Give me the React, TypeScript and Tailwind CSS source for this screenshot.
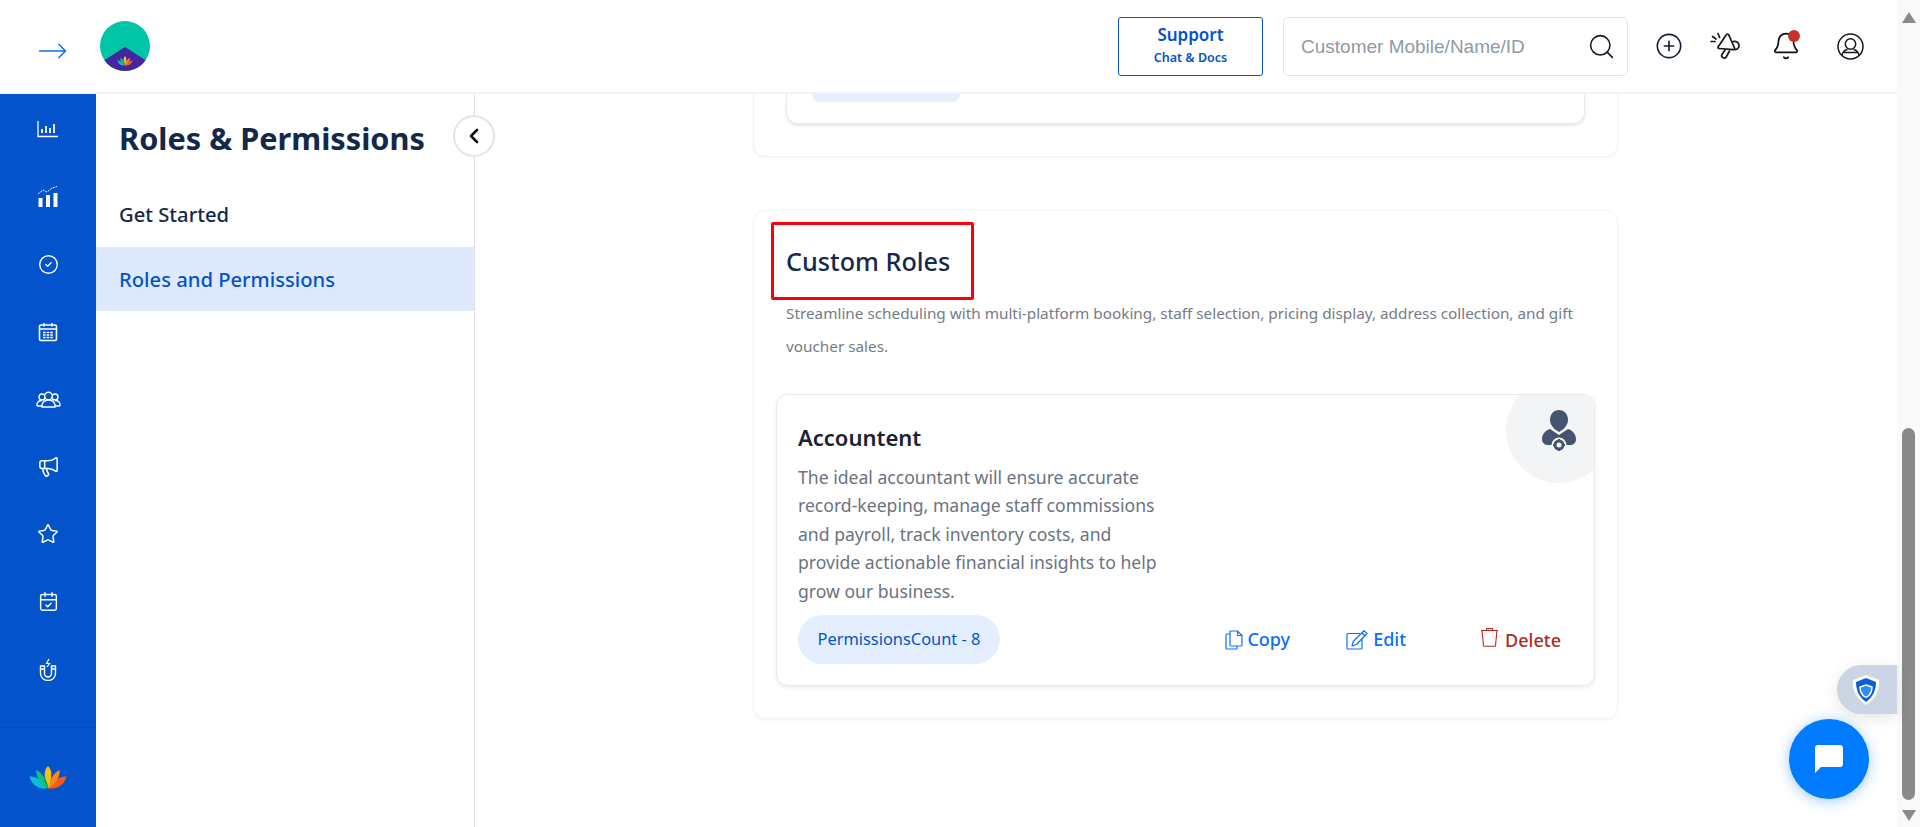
import { ChevronLeft, Star, CalendarCheck, CircleCheck, Search, CirclePlus, Bell, Megaphone } from 'lucide-react';

const FONT = "font-['Noto_Sans',sans-serif]";

function BarsIcon() {
  return (
    <svg width="22" height="18" viewBox="0 0 22 18" fill="none" stroke="white" strokeWidth="1.3">
      <path d="M1 1v15.5h20" />
      <path d="M5 13V9M9 13V6M13 13V8M17 13V4" strokeWidth="1.8" />
    </svg>
  );
}

function GrowthIcon() {
  return (
    <svg width="22" height="22" viewBox="0 0 22 22" fill="white">
      <rect x="1.5" y="12" width="4" height="9" />
      <rect x="9" y="9" width="4" height="12" />
      <rect x="16.5" y="7" width="4" height="14" />
      <path d="M1 8l5-4 4 2 5-4 5-1.5" fill="none" stroke="white" strokeWidth="1" strokeDasharray="2 1" />
    </svg>
  );
}

function CalendarGridIcon() {
  return (
    <svg width="20" height="20" viewBox="0 0 20 20" fill="none" stroke="white" strokeWidth="1.6">
      <rect x="1.5" y="3" width="17" height="15.5" rx="1.5" />
      <path d="M1.5 7h17M6 1v3.5M14 1v3.5" />
      <path d="M5 10.5h10M5 13h10M5 15.5h10" strokeWidth="1.6" strokeDasharray="2.6 1" />
    </svg>
  );
}

function GroupIcon() {
  return (
    <svg width="25" height="17" viewBox="0 0 25 17" fill="none" stroke="white" strokeWidth="1.4">
      <circle cx="6" cy="6" r="3" />
      <circle cx="19" cy="6" r="3" />
      <path d="M1 15c-.5-4 2-5.5 5-5.5M24 15c.5-4-2-5.5-5-5.5M1 15h5M19 15h5" />
      <circle cx="12.5" cy="5" r="3.8" fill="#0353cc" />
      <path d="M6 16c-.5-4.5 2.5-7 6.5-7s7 2.5 6.5 7z" fill="#0353cc" />
    </svg>
  );
}

function MagnetIcon() {
  return (
    <svg width="18" height="23" viewBox="0 0 18 23" fill="none" stroke="white" strokeWidth="1.4">
      <path d="M1.5 8v7.5a7.5 7 0 0 0 15 0V8h-4v7.5a3.5 3.5 0 0 1-7 0V8z" />
      <path d="M1.5 11h4M12.5 11h4" />
      <path d="M10 1L7.5 5.5h3L8 9" strokeWidth="1.2" />
    </svg>
  );
}

function Lotus({ size = 38 }: { size?: number }) {
  return (
    <svg width={size} height={size * 0.62} viewBox="0 0 38 24">
      <path d="M0 11c5-1 12 2 18 12-8 1-15-3-18-12z" fill="#0bbcd6" />
      <path d="M7 4c5 2 10 8 12 19-7-4-12-11-12-19z" fill="#0cc47a" />
      <path d="M38 11c-5-1-12 2-19 12 9 1 16-3 19-12z" fill="#f7590f" />
      <path d="M31 4c-5 2-10 8-12 19 7-4 12-11 12-19z" fill="#f98a1a" />
      <path d="M19 0c-4 4-5 10 0 23 5-13 4-19 0-23z" fill="#fbbf14" />
      <path d="M19 23c-3-5-4-8-4-12 2 3 4 7 4 12z" fill="#0a9a4a" />
    </svg>
  );
}

function AnnounceIcon() {
  return (
    <svg width="31" height="29" viewBox="0 0 31 29" fill="none" stroke="#15181f" strokeWidth="1.7" strokeLinejoin="round" strokeLinecap="round">
      <path d="M16.5 2.5c.8-.8 1.8-.6 2.3.3l5.7 13.2c.4 1-.2 1.8-1.2 1.7L9 16.500c-1-.1-1.300-1-.8-1.800z" />
      <path d="M23 9.500c3-.8 5.700 1 6 3.700.2 2.300-1.500 4.300-4 4.500" />
      <path d="M15 18l-3 4.500c-1.500 2.500 2.500 5 4.200 2.500l3.300-6" />
      <path d="M8 1.500l1.600 4M1 9.500h4M2.500 4.500l3.500 2.500" />
    </svg>
  );
}

function UserCircleIcon() {
  return (
    <svg width="27" height="27" viewBox="0 0 27 27" fill="none" stroke="#15181f" strokeWidth="1.5">
      <circle cx="13.5" cy="13.5" r="12.500" />
      <circle cx="13.500" cy="11" r="5.200" />
      <path d="M5 22.500c.5-3.500 3-5.500 5.500-6M22 22.500c-.5-3.500-3-5.500-5.500-6M7 19.500h13" />
    </svg>
  );
}

function DocsIcon() {
  return (
    <svg width="18" height="20" viewBox="0 0 18 20" fill="none" stroke="#0d6efd" strokeWidth="1.200" strokeLinejoin="round">
      <path d="M5 1h7.500L17 5.500V15c0 .6-.4 1-1 1H6c-.6 0-1-.4-1-1z" />
      <path d="M12.500 1v4.500H17" />
      <path d="M5 4H2c-.6 0-1 .4-1 1v13c0 .6.4 1 1 1h9c.6 0 1-.4 1-1v-2" />
    </svg>
  );
}

function EditIcon() {
  return (
    <svg width="22" height="20" viewBox="0 0 22 20" fill="none" stroke="#0d6efd" strokeWidth="1.200" strokeLinejoin="round">
      <path d="M14 3.500H2c-.6 0-1 .4-1 1V18c0 .6.4 1 1 1h13c.6 0 1-.4 1-1V9" />
      <path d="M18 .8l3 2.700L10.500 14.500 6 16l1.200-4.500z" />
      <path d="M16 3l3 2.700" />
    </svg>
  );
}

function BinIcon() {
  return (
    <svg width="19" height="20" viewBox="0 0 19 20" fill="none" stroke="#ad2a22" strokeWidth="1.100" strokeLinejoin="round">
      <path d="M1 3.500h17" />
      <path d="M6.500 3.500V1.500h6v2" />
      <path d="M2 3.500l1.500 15c0 .5.400.8.800.8h10.400c.4 0 .8-.3.8-.8l1.500-15" />
    </svg>
  );
}

function SidebarIcons() {
  return (
    <div className="flex flex-1 flex-col items-center gap-[37.500px] pt-[20px]">
      <span className="flex h-[30px] items-center"><BarsIcon /></span>
      <span className="flex h-[30px] items-center"><GrowthIcon /></span>
      <span className="flex h-[30px] items-center"><CircleCheck size={21} color="white" strokeWidth={1.6} /></span>
      <span className="flex h-[30px] items-center"><CalendarGridIcon /></span>
      <span className="flex h-[30px] items-center"><GroupIcon /></span>
      <span className="flex h-[30px] items-center"><Megaphone size={23} color="white" strokeWidth={1.6} /></span>
      <span className="flex h-[30px] items-center"><Star size={22} color="white" strokeWidth={1.6} /></span>
      <span className="flex h-[30px] items-center"><CalendarCheck size={21} color="white" strokeWidth={1.6} /></span>
      <span className="flex h-[30px] items-center"><MagnetIcon /></span>
    </div>
  );
}

function Header() {
  return (
    <header className="flex h-[94px] shrink-0 items-center border-b-2 border-[#f3f4f6] bg-white">
      <svg width="28" height="16" viewBox="0 0 28 16" fill="none" stroke="#0d6efd" strokeWidth="1.500" className="ml-[39px] mt-[9px]">
        <path d="M0 8h26.500M19.500 1l7 7-7 7" />
      </svg>
      <div className="relative ml-[33px] h-[50px] w-[50px] overflow-hidden rounded-full bg-[#00c6a7]">
        <svg width="50" height="50" viewBox="0 0 50 50" className="absolute left-0 top-0">
          <path d="M0 42L25 26l25 16v8H0z" fill="#46259f" />
        </svg>
        <span className="absolute left-[17px] top-[35px] flex"><Lotus size={16} /></span>
      </div>
      <div className="ml-auto flex items-center">
        <button className="flex h-[59px] w-[145px] flex-col items-center justify-center rounded-[3px] border border-[#0353cc] text-[#0353cc]">
          <span className="text-[17px] font-semibold leading-[24px]">Support</span>
          <span className="text-[12.500px] font-semibold leading-[22px]">Chat &amp; Docs</span>
        </button>
        <div className="ml-[20px] flex h-[59px] w-[345px] items-center rounded-[5px] border border-[#e3e5e8] pl-[17px] pr-[11px]">
          <span className="mt-[2px] flex-1 font-['Liberation_Sans',sans-serif] text-[19px] text-[#8f9ba5]">Customer Mobile/Name/ID</span>
          <Search size={29} strokeWidth={1.300} color="#111827" />
        </div>
        <div className="ml-[27px] mr-[33px] flex items-center gap-[27px]">
          <CirclePlus size={28} strokeWidth={1.400} color="#111c3a" />
          <AnnounceIcon />
          <div className="relative ml-[3px]">
            <Bell size={30} strokeWidth={1.400} color="#111" />
            <span className="absolute right-[1px] top-[-1px] h-[12px] w-[12px] rounded-full bg-[#c8302b]" />
          </div>
          <span className="ml-[9px]"><UserCircleIcon /></span>
        </div>
      </div>
    </header>
  );
}

function SidePanel() {
  return (
    <aside className="relative w-[379px] shrink-0 border-r border-[#dcdfe3] bg-white">
      <h1 className="pl-[23px] pt-[22px] text-[30.700px] font-bold leading-[44px] text-[#14284b]">Roles &amp; Permissions</h1>
      <p className="mt-[39px] pl-[23px] text-[20.200px] font-medium leading-[30px] text-[#14284b]">Get Started</p>
      <div className="mt-[18px] flex h-[64px] items-center bg-[#deeafc] pl-[23px] text-[20.200px] font-medium text-[#0353cc]">Roles and Permissions</div>
      <button className="absolute right-[-21px] top-[21px] flex h-[42px] w-[42px] items-center justify-center rounded-full border-2 border-[#e2e4e7] bg-white">
        <ChevronLeft size={24} strokeWidth={2.600} color="#111" />
      </button>
    </aside>
  );
}

function RoleCard() {
  return (
    <div className="relative mx-[22px] overflow-hidden rounded-[12px] border border-[#e8e9eb] bg-white pb-[21px] pl-[21px] pr-[33px] pt-[26px] shadow-[0_2px_4px_rgba(0,0,0,0.08)]">
      <div className="absolute right-[-18px] top-[-18px] flex h-[106px] w-[106px] items-center justify-center rounded-full bg-[#f3f4f6]">
        <svg width="34" height="42" viewBox="0 0 34 42" fill="#45546f" className="mt-[2px]">
          <path d="M17 0c5 0 9 4 9 10 0 4-3 8-6 10l-3 2-3-2c-3-2-6-6-6-10 0-6 4-10 9-10z" />
          <path d="M8 19l9 6 9-6c4 1 8 5 8 10 0 4-3 6-6 6H6c-3 0-6-2-6-6 0-5 4-9 8-10z" />
          <circle cx="17" cy="35" r="7.500" fill="#f3f4f6" />
          <circle cx="17" cy="35" r="4" fill="none" stroke="#45546f" strokeWidth="3" />
          <path d="M17 29v3M17 38v3M11 35h3M20 35h3" stroke="#45546f" strokeWidth="2" />
        </svg>
      </div>
      <h3 className="text-[22px] font-semibold leading-[32px] text-[#1a2233]">Accountent</h3>
      <p className="mt-[10px] w-[370px] text-[17.600px] leading-[28.400px] text-[#6b7280]">
        The ideal accountant will ensure accurate record-keeping, manage staff commissions and payroll, track inventory costs, and provide actionable financial insights to help grow our business.
      </p>
      <div className="mt-[10px] flex items-center">
        <span className="flex h-[49px] w-[202px] items-center justify-center rounded-full bg-[#e3effe] text-[16.400px] text-[#0353cc]">PermissionsCount - 8</span>
        <div className="ml-auto flex items-center text-[18px] font-medium text-[#0d6efd]">
          <span className="flex items-center gap-[4px]"><DocsIcon />Copy</span>
          <span className="ml-[56px] flex items-center gap-[5px]"><EditIcon />Edit</span>
          <span className="ml-[74px] flex items-center gap-[6px] text-[#ad2a22]"><span className="mt-[-5px] flex"><BinIcon /></span><span className="mt-[2px]">Delete</span></span>
        </div>
      </div>
    </div>
  );
}

export default function App() {
  return (
    <div className={`flex h-[827px] w-[1920px] overflow-hidden bg-white ${FONT}`}>
      <div className="relative flex min-w-0 flex-1 flex-col">
        <Header />
        <div className="flex min-h-0 flex-1">
          <nav className="flex w-[96px] shrink-0 flex-col bg-[#0353cc]">
            <SidebarIcons />
            <div className="flex h-[100px] items-center justify-center border-t border-[#0a4bb0]"><Lotus /></div>
          </nav>
          <SidePanel />
          <main className="min-w-0 flex-1 bg-white pl-[278px]">
            <section className="flex h-[63px] w-[865px] items-end rounded-b-[12px] border border-t-0 border-[#f0f1f2] pb-[32px] shadow-[0_1px_3px_rgba(0,0,0,0.04)]">
              <div className="relative mx-[32px] h-[30px] w-[800px] overflow-hidden rounded-b-[12px] border border-t-0 border-[#e8e9eb] shadow-[0_2px_3px_rgba(0,0,0,0.1)]">
                <div className="ml-[25px] h-[8px] w-[148px] rounded-b-[20px] bg-[#e6f0fd]" />
              </div>
            </section>
            <section className="mt-[53px] h-[509px] w-[865px] rounded-[12px] border border-[#f3f4f5] shadow-[0_1px_3px_rgba(0,0,0,0.05)]">
              <div className="ml-[17px] mt-[11px] flex h-[78px] w-[203px] items-center rounded-[2px] border-[3px] border-[#fb0007] pl-[12px] pt-[2px]">
                <h2 className="text-[25.200px] font-medium text-[#14284b]">Custom Roles</h2>
              </div>
              <p className="mt-[-3px] w-[840px] pl-[32px] text-[15.300px] leading-[33px] text-[#757b85]">
                Streamline scheduling with multi-platform booking, staff selection, pricing display, address collection, and gift voucher sales.
              </p>
              <div className="mt-[31px]"><RoleCard /></div>
            </section>
          </main>
        </div>
        <div className="absolute right-0 top-[665px] flex h-[49px] w-[60px] items-center rounded-l-full bg-[#cbd5e3] pl-[15px] shadow-[0_4px_16px_rgba(0,0,0,0.1)]">
          <svg width="28" height="30" viewBox="0 0 28 30">
            <path d="M14 0l13 5c1 9-3 19-13 25C4 24 0 14 1 5z" fill="white" />
            <path d="M14 3l10 4c0 8-3 15-10 20C7 22 4 15 4 7z" fill="#0b5fd6" />
            <path d="M14 10l6 2c0 5-2 8-5 10h-2c-3-2-5-5-5-10z" fill="#2f8cf5" stroke="white" strokeWidth="1.500" />
          </svg>
        </div>
        <button className="absolute left-[1789px] top-[719px] flex h-[80px] w-[80px] items-center justify-center rounded-full bg-[#007bff] shadow-[0_2px_14px_rgba(0,123,255,0.4)]">
          <svg width="28" height="28" viewBox="0 0 28 28" fill="white">
            <path d="M3 0h22c1.700 0 3 1.300 3 3v16c0 1.700-1.300 3-3 3H6l-6 6V3c0-1.700 1.300-3 3-3z" />
          </svg>
        </button>
      </div>
      <div className="flex w-[23px] shrink-0 flex-col items-center bg-[#fafafa]">
        <span className="mt-[12px] h-0 w-0 border-x-[7px] border-b-[11px] border-x-transparent border-b-[#8a8a8a]" />
        <span className="mt-[405px] h-[372px] w-[13px] rounded-full bg-[#8a8a8a]" />
        <span className="mt-[10px] h-0 w-0 border-x-[7px] border-t-[11px] border-x-transparent border-t-[#8a8a8a]" />
      </div>
    </div>
  );
}
